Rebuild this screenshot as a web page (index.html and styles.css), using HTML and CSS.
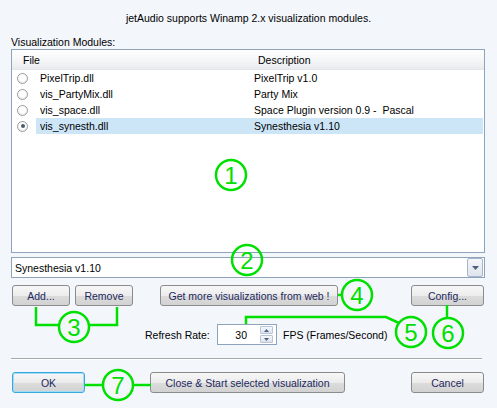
FILE: index.html
```html
<!DOCTYPE html>
<html>
<head>
<meta charset="utf-8">
<link rel="stylesheet" href="styles.css">
</head>
<body>
<div class="dialog">
  <div class="title">jetAudio supports Winamp 2.x visualization modules.</div>
  <div class="label">Visualization Modules:</div>
  <div class="listview">
    <div class="lv-head">
      <div class="c1 head-file">File</div>
      <div class="c2">Description</div>
    </div>
    <div class="lv-row"><span class="radio"></span><span class="c1">PixelTrip.dll</span><span class="c2">PixelTrip v1.0</span></div>
    <div class="lv-row"><span class="radio"></span><span class="c1">vis_PartyMix.dll</span><span class="c2">Party Mix</span></div>
    <div class="lv-row"><span class="radio"></span><span class="c1">vis_space.dll</span><span class="c2">Space Plugin version 0.9 -&nbsp; Pascal</span></div>
    <div class="lv-row selected"><span class="radio checked"></span><span class="c1 sel">vis_synesth.dll</span><span class="c2 sel">Synesthesia v1.10</span></div>
  </div>
  <div class="combo">
    <span class="combo-text">Synesthesia v1.10</span>
    <span class="drop"><svg width="7" height="4" viewBox="0 0 7 4"><path d="M0 0h7L3.5 4z" fill="#4d6185"/></svg></span>
  </div>
  <div class="btn-row">
    <button class="btn w58">Add...</button>
    <button class="btn w58">Remove</button>
    <button class="btn web">Get more visualizations from web !</button>
    <button class="btn w73 push">Config...</button>
  </div>
  <div class="refresh-row">
    <span class="refresh-label">Refresh Rate:</span>
    <div class="spin-input">
      <span class="spin-value">30</span>
      <span class="spin">
        <span class="spin-btn"><svg width="5" height="3" viewBox="0 0 5 3"><path d="M0 3h5L2.5 0z" fill="#4d6185"/></svg></span>
        <span class="spin-btn"><svg width="5" height="3" viewBox="0 0 5 3"><path d="M0 0h5L2.5 3z" fill="#4d6185"/></svg></span>
      </span>
    </div>
    <span class="fps">FPS (Frames/Second)</span>
  </div>
  <div class="sep"></div>
  <div class="btn-row bottom">
    <button class="btn w73 focus">OK</button>
    <button class="btn close">Close &amp; Start selected visualization</button>
    <button class="btn w73 push">Cancel</button>
  </div>
  <svg class="annot" width="497" height="408" viewBox="0 0 497 408">
    <g fill="none" stroke="#00e000" stroke-width="2.5">
      <circle cx="231" cy="175" r="15"/>
      <circle cx="247" cy="260" r="15"/>
      <circle cx="74" cy="327" r="15"/>
      <polyline points="36,307 36,325 59,325"/>
      <polyline points="117,307 117,325 89,325"/>
      <circle cx="357" cy="295" r="15"/>
      <line x1="338" y1="295" x2="342" y2="295"/>
      <circle cx="411" cy="332" r="15"/>
      <polyline points="246,324 246,317 386,317 399,323"/>
      <circle cx="448" cy="333" r="15"/>
      <line x1="447" y1="305" x2="447" y2="318"/>
      <circle cx="118" cy="385" r="15"/>
      <line x1="85" y1="385" x2="103" y2="385"/>
      <line x1="133" y1="385" x2="151" y2="385"/>
    </g>
    <g class="num" fill="#00e000">
      <text x="231" y="184">1</text>
      <text x="247" y="269">2</text>
      <text x="74" y="336">3</text>
      <text x="357" y="304">4</text>
      <text x="411" y="341">5</text>
      <text x="448" y="342">6</text>
      <text x="118" y="394">7</text>
    </g>
  </svg>
</div>
</body>
</html>
```

FILE: styles.css
```css
* { box-sizing: border-box; }
html, body { margin: 0; padding: 0; }
body {
  background: #f3f6fb;
  font-family: "Liberation Sans", Arial, sans-serif;
  font-size: 10.5px;
  color: #000;
}
.dialog {
  position: relative;
  width: 497px;
  height: 408px;
  padding: 11px 12px 0 11px;
  background: #f3f6fb;
  overflow: hidden;
}
.title {
  line-height: 14px;
  text-align: center;
  padding-left: 1px;
}
.label {
  margin-top: 10px;
  line-height: 14px;
}
.listview {
  height: 204px;
  border: 1px solid #8ea3bc;
  background: #fff;
}
.lv-head {
  display: flex;
  height: 20px;
  align-items: center;
  background: linear-gradient(#ffffff, #f4f5f7 60%, #e9ebee);
  border-bottom: 1px solid #e2e5ea;
}
.lv-head .c1 { width: 241px; padding-left: 11px; }
.lv-head .c2 { padding-left: 5px; }
.lv-row {
  display: flex;
  align-items: center;
  height: 16px;
}
.radio {
  width: 11px;
  height: 11px;
  margin-left: 5px;
  border-radius: 50%;
  border: 1px solid #9c9c9c;
  background: radial-gradient(circle at 50% 40%, #fff 40%, #e2e2e2);
  flex: none;
  position: relative;
}
.radio.checked::after {
  content: "";
  position: absolute;
  left: 2.5px;
  top: 2.5px;
  width: 4px;
  height: 4px;
  border-radius: 50%;
  background: #505a6a;
}
.lv-row .c1 {
  width: 217px;
  margin-left: 8px;
  padding-left: 4px;
  line-height: 16px;
}
.lv-row .c2 {
  flex: 1;
  padding-left: 1px;
  line-height: 16px;
  margin-right: 1px;
}
.lv-row .sel { background: #cce5f7; }
.combo {
  margin-top: 4px;
  height: 21px;
  border: 1px solid #8ea3bc;
  background: #fff;
  display: flex;
  align-items: center;
  justify-content: space-between;
}
.combo-text { padding-left: 3px; }
.drop {
  width: 16px;
  height: 19px;
  margin-right: 1px;
  border: 1px solid #a8b6cc;
  border-radius: 2px;
  background: linear-gradient(#f4f6fa, #dfe4ec);
  display: flex;
  align-items: center;
  justify-content: center;
}
.btn-row {
  display: flex;
  margin-top: 7px;
  padding-left: 1px;
  padding-right: 1px;
}
.btn {
  height: 21px;
  font: inherit;
  color: #1d2860;
  border: 1px solid #8b8b8b;
  border-radius: 3px;
  background: linear-gradient(#f7f7f7, #ececec 50%, #dcdcdc 51%, #d2d2d2);
  padding: 0;
  margin: 0;
}
.w58 { width: 58px; }
.w58 + .w58 { margin-left: 5px; }
.w73 { width: 73px; }
.web { width: 178px; margin-left: 27px; }
.push { margin-left: auto; }
.refresh-row {
  display: flex;
  align-items: center;
  margin-top: 18px;
  height: 21px;
}
.refresh-label {
  margin-left: 134px;
  width: 72px;
}
.spin-input {
  width: 60px;
  height: 21px;
  border: 1px solid #8ea3bc;
  background: #fff;
  display: flex;
  align-items: center;
  justify-content: flex-end;
}
.spin-value { margin-right: 13px; }
.spin {
  display: flex;
  flex-direction: column;
  gap: 1px;
  margin-right: 3px;
}
.spin-btn {
  width: 13px;
  height: 8px;
  border: 1px solid #b9c5d6;
  border-radius: 1px;
  background: linear-gradient(#f6f8fb, #dde3ec);
  display: flex;
  align-items: center;
  justify-content: center;
}
.fps { margin-left: 6px; }
.sep {
  margin-top: 13px;
  height: 2px;
  border-top: 1px solid #a5a8ad;
  border-bottom: 1px solid #fff;
  margin-right: 3px;
}
.bottom { margin-top: 12px; }
.focus {
  border-color: #38a8dc;
  box-shadow: inset 0 0 0 1px #9fdcf7;
}
.close { width: 195px; margin-left: 65px; }
.annot {
  position: absolute;
  left: 0;
  top: 0;
  pointer-events: none;
}
.num text {
  font-family: "Liberation Sans", Arial, sans-serif;
  font-size: 24px;
  text-anchor: middle;
}
```
